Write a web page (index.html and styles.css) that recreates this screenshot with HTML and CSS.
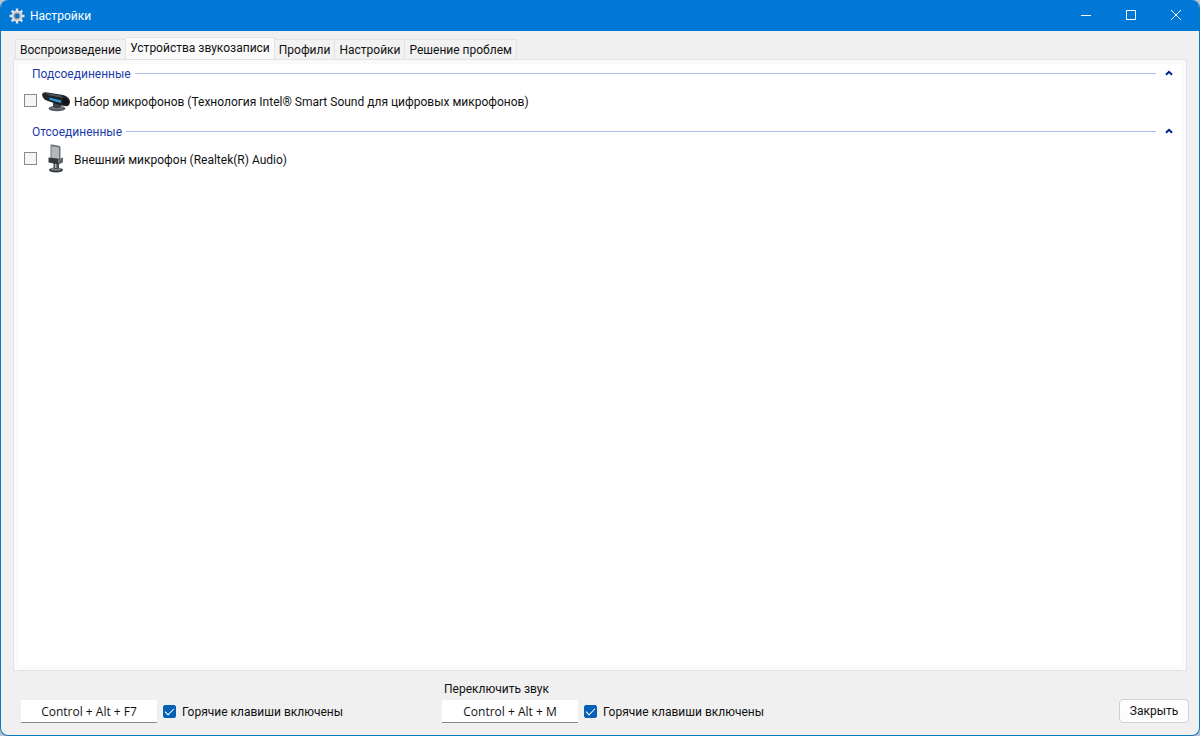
FILE: index.html
```html
<!DOCTYPE html>
<html lang="ru">
<head>
    <meta charset="UTF-8">
    <meta name="viewport" content="width=device-width, initial-scale=1.0">
    <title>Настройки</title>
    <link rel="stylesheet" href="styles.css">
</head>
<body>
    <div class="window">
        <header class="titlebar">
            <svg class="app-icon" viewBox="0 0 16 16" aria-hidden="true">
                <g stroke="#e6e3df" stroke-width="2.4">
                    <path d="M8 0.5v15M0.5 8h15M2.7 2.7l10.6 10.6M13.3 2.7L2.7 13.3"/>
                </g>
                <circle cx="8" cy="8" r="5.4" fill="#e6e3df"/>
                <circle cx="8" cy="8" r="3.8" fill="#aaa9a9"/>
                <circle cx="8" cy="8" r="2.4" fill="#0a72cc"/>
            </svg>
            <h1 class="title">Настройки</h1>
            <div class="window-buttons">
                <button class="window-btn" type="button" aria-label="Свернуть">
                    <svg viewBox="0 0 12 12"><path d="M1 6.5h10"/></svg>
                </button>
                <button class="window-btn" type="button" aria-label="Развернуть">
                    <svg viewBox="0 0 12 12"><path d="M1.5 1.5h9v9h-9z"/></svg>
                </button>
                <button class="window-btn" type="button" aria-label="Закрыть окно">
                    <svg viewBox="0 0 12 12"><path d="M1 1l10 10M11 1L1 11"/></svg>
                </button>
            </div>
        </header>

        <main class="content">
            <div class="tabs" role="tablist">
                <button class="tab" type="button" role="tab">Воспроизведение</button>
                <button class="tab active" type="button" role="tab" aria-selected="true">Устройства звукозаписи</button>
                <button class="tab" type="button" role="tab">Профили</button>
                <button class="tab" type="button" role="tab">Настройки</button>
                <button class="tab" type="button" role="tab">Решение проблем</button>
            </div>

            <div class="panel" role="tabpanel">
                <div class="device-list">
                    <section class="group">
                        <div class="group-header">
                            <h2>Подсоединенные</h2>
                            <span class="line"></span>
                            <button class="collapse" type="button" aria-label="Свернуть группу">
                                <svg viewBox="0 0 8 6"><path d="M1 4.8L4 1.8l3 3"/></svg>
                            </button>
                        </div>
                        <label class="device">
                            <input class="check" type="checkbox">
                            <svg class="device-icon" viewBox="0 0 30 30" aria-hidden="true">
                                <ellipse cx="16" cy="22.500" rx="8.500" ry="2.800" fill="#555c63"/>
                                <ellipse cx="16" cy="21.500" rx="6" ry="1.600" fill="#7b848b"/>
                                <path d="M12 16l8 2v3.500q-4 1.500-8 0z" fill="#3c4248"/>
                                <path d="M1 8.500Q1.500 6 5 6.200L22 9Q28.500 10.500 29 15.500Q29 20 25 20.300L20 19.500L5.500 14.500Q1.500 12.500 1 8.500z" fill="#22272c"/>
                                <path d="M4.500 7L20 9.600l2 2.400L8 9.400z" fill="#4b5259"/>
                                <path d="M8 9.500L20 12V18.500L8.500 14.800z" fill="#17222b"/>
                                <path d="M8.500 11.500l11.500 3v2.600L8.500 13.800z" fill="#2f9bd6"/>
                                <path d="M22 11.500q6 1.500 6 5q-.5 2.500-3 2.500l-3.500-.8z" fill="#111417"/>
                            </svg>
                            <span class="device-name">Набор микрофонов (Технология Intel® Smart Sound для цифровых микрофонов)</span>
                        </label>
                    </section>

                    <section class="group">
                        <div class="group-header">
                            <h2>Отсоединенные</h2>
                            <span class="line"></span>
                            <button class="collapse" type="button" aria-label="Свернуть группу">
                                <svg viewBox="0 0 8 6"><path d="M1 4.8L4 1.8l3 3"/></svg>
                            </button>
                        </div>
                        <label class="device">
                            <input class="check" type="checkbox">
                            <svg class="device-icon" viewBox="0 0 30 30" aria-hidden="true">
                                <ellipse cx="15" cy="26" rx="7" ry="2.600" fill="#35393c"/>
                                <ellipse cx="15" cy="25" rx="5.500" ry="1.500" fill="#7d8286"/>
                                <path d="M12.500 18h5.500v6.500q-2.500 1-5.500 0z" fill="#4a4e51"/>
                                <path d="M14 19h1.500v5H14z" fill="#b5b9bc"/>
                                <path d="M9.500 1.500q0-1.300 1.500-1l7 1.200q1.500.3 1.500 1.800V16l-10-1z" fill="#6f7376"/>
                                <path d="M10.500 2.200l7.500 1.200V14.500l-7.500-.8z" fill="#b4b7b9"/>
                                <path d="M7.500 13.500l10 1.500v5.500l-10-2z" fill="#34383b"/>
                                <path d="M17.500 15l4.500-1.500v5l-4.500 2z" fill="#62676a"/>
                            </svg>
                            <span class="device-name">Внешний микрофон (Realtek(R) Audio)</span>
                        </label>
                    </section>
                </div>
            </div>
        </main>

        <footer class="footer">
            <div class="hotkey">
                <input class="hotkey-input" type="text" value="Control + Alt + F7" aria-label="Горячая клавиша устройства">
                <label class="hotkey-toggle">
                    <input class="check" type="checkbox" checked>
                    <span>Горячие клавиши включены</span>
                </label>
            </div>
            <div class="hotkey">
                <label class="hotkey-title" for="muteKey">Переключить звук</label>
                <input class="hotkey-input" id="muteKey" type="text" value="Control + Alt + M">
                <label class="hotkey-toggle">
                    <input class="check" type="checkbox" checked>
                    <span>Горячие клавиши включены</span>
                </label>
            </div>
            <button class="btn" type="button">Закрыть</button>
        </footer>
    </div>
</body>
</html>
```
FILE: styles.css
```css
* {
    margin: 0;
    padding: 0;
    box-sizing: border-box;
}

body {
    font-family: Roboto, "Noto Sans", sans-serif;
    font-size: 12px;
    line-height: 16px;
    color: #111;
    background: #b9c4cc;
}

button,
input {
    font: inherit;
    color: inherit;
}

.window {
    min-height: 100vh;
    display: flex;
    flex-direction: column;
    background: #f0f0f0;
    border: 1px solid #0b78bb;
    border-top: none;
    border-radius: 8px;
    overflow: hidden;
}

/* Title bar */
.titlebar {
    display: flex;
    align-items: center;
    height: 31px;
    padding: 0 1px 0 8px;
    background: #0078d7;
    color: #fff;
}

.app-icon {
    width: 16px;
    height: 16px;
    margin-right: 5px;
}

.title {
    font-size: 12px;
    font-weight: normal;
}

.window-buttons {
    display: flex;
    align-self: stretch;
    margin-left: auto;
}

.window-btn {
    width: 45px;
    padding-bottom: 1px;
    border: none;
    background: none;
    display: flex;
    align-items: center;
    justify-content: center;
}

.window-btn svg {
    width: 12px;
    height: 12px;
    fill: none;
    stroke: #fff;
}

/* Tabs */
.content {
    flex: 1;
    display: flex;
    flex-direction: column;
    padding: 6px 12px 0;
}

.tabs {
    display: flex;
    align-items: flex-end;
    padding-left: 2px;
}

.tab {
    height: 20px;
    padding: 0 4px;
    border: 1px solid #e3e3e3;
    border-left: none;
    border-bottom: none;
    background: #f2f2f2;
    white-space: nowrap;
}

.tab:first-child {
    border-left: 1px solid #e3e3e3;
}

.tab.active {
    height: 22px;
    padding-bottom: 2px;
    background: #fafafa;
}

.panel {
    flex: 1;
    display: flex;
    padding: 4px 5px;
    background: #fafafa;
    border: 1px solid #e3e3e3;
}

.device-list {
    flex: 1;
    background: #fff;
}

/* Device groups */
.group {
    margin-bottom: 6px;
}

.group-header {
    display: flex;
    align-items: center;
    height: 18px;
    padding: 0 7px 0 13px;
}

.group-header h2 {
    padding-top: 2px;
    font-size: 12px;
    font-weight: normal;
    color: #1a3cab;
}

.line {
    flex: 1;
    height: 1px;
    margin: 0 8px 0 4px;
    background: #b2b8f0;
}

.collapse {
    display: flex;
    padding: 0 1px;
    border: none;
    background: none;
}

.collapse svg {
    width: 8px;
    height: 6px;
    fill: none;
    stroke: #00218c;
    stroke-width: 2;
}

.device {
    display: flex;
    align-items: center;
    height: 30px;
    margin-top: 4px;
    padding-left: 5px;
}

.device .check {
    margin-bottom: 2px;
}

.device-icon {
    width: 30px;
    height: 30px;
    margin: 0 3px 0 4px;
}

.device-name {
    padding-top: 2px;
}

.check {
    appearance: none;
    flex: none;
    width: 13px;
    height: 13px;
    border: 1px solid #8a8a8a;
    background: #f5f5f5;
    display: grid;
    place-items: center;
}

.check:checked {
    border-color: #0560b6;
    border-radius: 2px;
    background: #0560b6;
}

.check:checked::before {
    content: "";
    width: 8px;
    height: 4px;
    margin-bottom: 2px;
    border-left: 1px solid #fff;
    border-bottom: 1px solid #fff;
    transform: rotate(-45deg);
}

/* Footer */
.footer {
    display: flex;
    align-items: flex-end;
    padding: 10px 10px 12px 20px;
}

.hotkey {
    display: grid;
    grid-template-columns: 136px auto;
    column-gap: 6px;
    row-gap: 3px;
    width: 421px;
}

.hotkey-title {
    grid-column: 1 / -1;
    padding-left: 2px;
}

.hotkey-input {
    width: 136px;
    height: 23px;
    border: none;
    border-bottom: 1px solid #868686;
    background: #fff;
    font-family: "Open Sans", "Noto Sans", sans-serif;
    text-align: center;
}

.hotkey-toggle {
    display: flex;
    align-items: center;
    gap: 6px;
}

.btn {
    width: 70px;
    height: 24px;
    margin-left: auto;
    border: 1px solid #d0d0d0;
    border-radius: 4px;
    background: #fdfdfd;
}
```
